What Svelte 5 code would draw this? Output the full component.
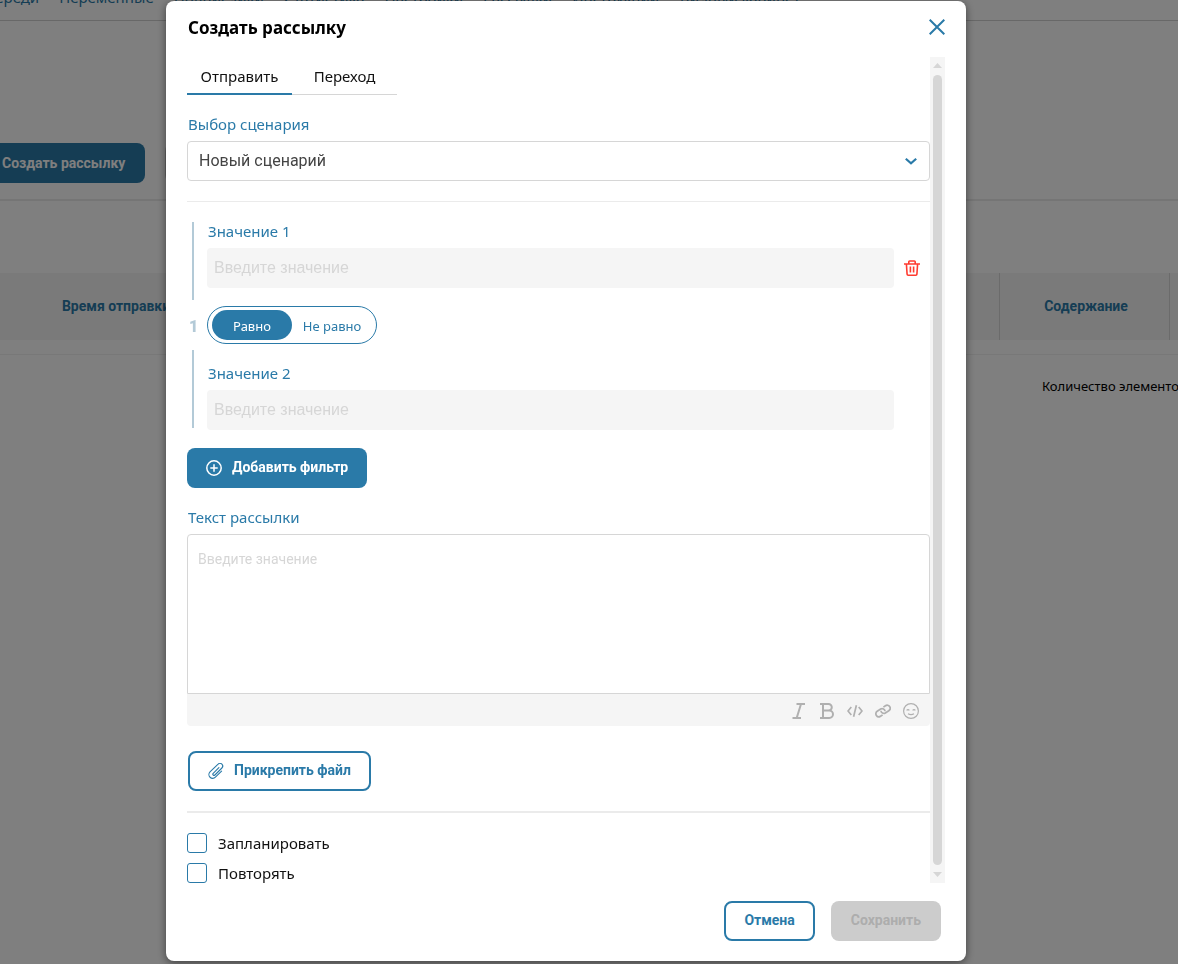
<script lang="ts">
    const menu = ['Очереди', 'Переменные', 'Подписчики', 'Статистика', 'Настройки', 'Рассылки', 'Инструкции', 'Личный кабинет'];
    const tabs = ['Отправить', 'Переход'];
    const operators = ['Равно', 'Не равно'];

    let activeTab = $state('Отправить');
    let operator = $state('Равно');
    let scenario = $state('Новый сценарий');
    let first = $state('');
    let second = $state('');
    let message = $state('');
    let planned = $state(false);
    let repeated = $state(false);
</script>

<div class="page">
    <nav class="menu">
        {#each menu as item}
            <a href="#menu">{item}</a>
        {/each}
    </nav>
    <div class="actions">
        <button class="btn primary page-btn">Создать рассылку</button>
        <button class="btn disabled" disabled aria-label="Удалить"></button>
    </div>
    <table class="table">
        <thead>
            <tr>
                <th class="time">Время отправки</th>
                <th></th>
                <th class="content">Содержание</th>
                <th class="tail"></th>
            </tr>
        </thead>
    </table>
    <div class="pager"><span>Количество элементов</span></div>
</div>

<div class="overlay">
    <div class="modal" role="dialog" aria-modal="true" aria-labelledby="modal-title">
        <header class="head">
            <h2 id="modal-title">Создать рассылку</h2>
            <button class="icon-btn" aria-label="Закрыть">
                <svg width="16" height="16" viewBox="0 0 16 16" fill="none" stroke="#2a7aa8" stroke-width="2">
                    <path d="M.7.7l14.6 14.6M15.3.7L.7 15.3" />
                </svg>
            </button>
        </header>

        <div class="body">
            <div class="form">
                <div class="tabs" role="tablist">
                    {#each tabs as tab}
                        <button class="tab" class:active={activeTab === tab} role="tab" aria-selected={activeTab === tab}
                            onclick={() => (activeTab = tab)}>{tab}</button>
                    {/each}
                </div>

                <div class="field scenario">
                    <label for="scenario">Выбор сценария</label>
                    <div class="select">
                        <select id="scenario" bind:value={scenario}>
                            <option>Новый сценарий</option>
                        </select>
                        <svg class="chevron" width="14" height="8" viewBox="0 0 14 8" fill="none" stroke="#2a7aa8" stroke-width="2.2">
                            <path d="M1.8 1.8L7 6.4l5.2-4.6" />
                        </svg>
                    </div>
                </div>

                <div class="filter">
                    <div class="rail">
                        <i></i>
                        <b>1</b>
                        <i></i>
                    </div>
                    <div class="values">
                        <div class="field">
                            <label for="first">Значение 1</label>
                            <div class="value-row">
                                <input id="first" type="text" placeholder="Введите значение" bind:value={first} />
                                <button class="icon-btn" aria-label="Удалить фильтр">
                                    <svg width="16" height="16" viewBox="0 0 16 16" fill="none" stroke="#ff3b30" stroke-width="1.6">
                                        <path d="M0 4h16M4.8 4V1.8q0-.8.8-.8h4.8q.8 0 .8.8V4M2.4 4l.7 10.2q.1 1 1 1h7.8q.9 0 1-1L13.6 4M6.4 6.5v6M9.6 6.5v6" />
                                    </svg>
                                </button>
                            </div>
                        </div>
                        <div class="toggle">
                            {#each operators as op}
                                <button class:on={operator === op} onclick={() => (operator = op)}>{op}</button>
                            {/each}
                        </div>
                        <div class="field">
                            <label for="second">Значение 2</label>
                            <div class="value-row">
                                <input id="second" type="text" placeholder="Введите значение" bind:value={second} />
                            </div>
                        </div>
                    </div>
                </div>

                <button class="btn primary add">
                    <svg width="16" height="16" viewBox="0 0 16 16" fill="none" stroke="#fff" stroke-width="1.5">
                        <circle cx="8" cy="8" r="7.2" />
                        <path d="M8 4.3v7.4M4.3 8h7.4" />
                    </svg>
                    Добавить фильтр
                </button>

                <div class="field">
                    <label for="message">Текст рассылки</label>
                    <div class="editor">
                        <textarea id="message" placeholder="Введите значение" bind:value={message}></textarea>
                        <div class="toolbar">
                            <button class="icon-btn" aria-label="Курсив">
                                <svg width="16" height="16" viewBox="0 0 16 16" fill="none" stroke="#b0b0b0" stroke-width="2">
                                    <path d="M5.5 1h8.5M1.5 15h8.5M10 1L5.7 15" />
                                </svg>
                            </button>
                            <button class="icon-btn" aria-label="Жирный">
                                <svg width="16" height="16" viewBox="0 0 16 16" fill="none" stroke="#b0b0b0" stroke-width="2">
                                    <path d="M1 1h8.5a3.3 3.3 0 0 1 0 6.6H4M9.5 7.6h.8a3.7 3.7 0 0 1 0 7.4H1M4 1v14" />
                                </svg>
                            </button>
                            <button class="icon-btn" aria-label="Код">
                                <svg width="16" height="16" viewBox="0 0 16 16" fill="none" stroke="#b0b0b0" stroke-width="1.7">
                                    <path d="M4.3 4L1 8l3.3 4M11.7 4L15 8l-3.3 4M9.4 2.3L6.6 13.7" />
                                </svg>
                            </button>
                            <button class="icon-btn" aria-label="Ссылка">
                                <svg width="16" height="16" viewBox="0 0 16 16" fill="none" stroke="#b0b0b0" stroke-width="1.7">
                                    <g transform="rotate(-34 8 8)">
                                        <path d="M9.6 9.4A3 3 0 0 0 7.2 5H3a3 3 0 0 0 0 6h2.5" />
                                        <path d="M6.4 6.6A3 3 0 0 0 8.8 11H13a3 3 0 0 0 0-6h-2.5" />
                                    </g>
                                </svg>
                            </button>
                            <button class="icon-btn" aria-label="Эмодзи">
                                <svg width="16" height="16" viewBox="0 0 16 16" fill="none" stroke="#b0b0b0" stroke-width="1.2">
                                    <circle cx="8" cy="8" r="7.4" />
                                    <path d="M3.6 7.4q1.4-1.4 2.8 0M9.6 7.4q1.4-1.4 2.8 0M5 10.8q3 1.8 6 0" />
                                </svg>
                            </button>
                        </div>
                    </div>
                </div>

                <button class="btn outline attach">
                    <svg width="16" height="16" viewBox="0 0 16 16" fill="none" stroke="#2a7aa8" stroke-width="1.1" stroke-linecap="round">
                        <path d="M10.9 4.6L5.2 10.3a1.2 1.2 0 0 0 1.7 1.7l7-7a2.5 2.5 0 0 0-3.8-3.8L2 8.9a3.7 3.7 0 0 0 5.4 5.3l6.2-6.1" />
                    </svg>
                    Прикрепить файл
                </button>

                <div class="checks">
                    <label><input type="checkbox" bind:checked={planned} />Запланировать</label>
                    <label><input type="checkbox" bind:checked={repeated} />Повторять</label>
                </div>
            </div>

            <div class="scroll" aria-hidden="true">
                <svg width="9" height="5" viewBox="0 0 9 5"><path d="M0 5L4.5 0 9 5z" fill="#d6d6d6" /></svg>
                <div class="thumb"></div>
                <svg width="9" height="5" viewBox="0 0 9 5"><path d="M0 0l4.5 5L9 0z" fill="#d6d6d6" /></svg>
            </div>
        </div>

        <footer class="foot">
            <button class="btn outline">Отмена</button>
            <button class="btn disabled" disabled>Сохранить</button>
        </footer>
    </div>
</div>

<style>
    :global(body) { margin: 0; background: #fff; font-family: "Noto Sans", "Open Sans", sans-serif; overflow: hidden; }
    * { box-sizing: border-box; }
    button, input, select, textarea { font-family: Roboto, sans-serif; margin: 0; }
    button { cursor: pointer; }

    .page { overflow: hidden; }
    .menu { display: flex; gap: 20px; height: 61px; margin: -40px 0 0 -25px; padding-top: 27px;
        border-bottom: 1px solid #d0d0d0; white-space: nowrap; }
    .menu a { color: #2a7aa8; text-decoration: none; font-size: 15px; line-height: 20px; }
    .actions { display: flex; gap: 20px; padding: 122px 0 16px; border-bottom: 2px solid #ebebeb; }
    .page-btn { margin-left: -18px; padding-right: 16px; }
    .table { width: 100%; margin-top: 72px; border-collapse: collapse; table-layout: fixed; background: #f5f5f5; }
    .table th { height: 67px; padding: 0 0 2px; color: #2a7aa8; font: 700 14px/20px Roboto, sans-serif; }
    .table .time { width: 232px; }
    .table .content { width: 170px; padding-left: 4px; border-left: 1px solid #d6d6d6; border-right: 1px solid #d6d6d6; }
    .table .tail { width: 9px; }
    .pager { display: flex; justify-content: flex-end; margin-top: 14px; padding-top: 21px;
        border-top: 1px solid #f0f0f0; font-size: 13px; line-height: 20px; white-space: nowrap; }
    .pager span { width: 136px; }

    .overlay { position: fixed; inset: 0; padding: 1px 46px 0 0; display: flex; justify-content: center;
        align-items: flex-start; overflow: hidden; background: rgba(0, 0, 0, .5); }
    .modal { width: 800px; max-width: 100%; padding: 0 21px 20px; border-radius: 8px; background: #fff;
        box-shadow: 0 2px 8px rgba(0, 0, 0, .5); }
    .head { display: flex; justify-content: space-between; align-items: center; height: 56px; padding-bottom: 4px; }
    .head h2 { margin: 0; padding: 2px 0 0 1px; font-size: 17px; line-height: 24px; }

    .icon-btn { display: flex; justify-content: center; align-items: center; padding: 0; border: 0; background: none; }
    .btn { display: flex; align-items: center; height: 40px; padding: 0 20px 2px; border: 0; border-radius: 8px;
        font-size: 14px; font-weight: 700; line-height: 20px; white-space: nowrap; }
    .primary { background: #2a7aa8; color: #fff; }
    .outline { border: 2px solid #2a7aa8; padding: 0 18px 2px; background: #fff; color: #2a7aa8; }
    .disabled { background: #ccc; color: #adadad; }
    .btn.page-btn { padding-bottom: 0; }
    .btn svg { margin-top: 2px; }

    .body { display: flex; }
    .form { flex: 1; min-width: 0; }
    .tabs { display: flex; }
    .tab { width: 105px; height: 38px; padding: 2px 0 1px; border: 0; border-bottom: 1px solid #d6d6d6; background: none;
        color: #111; font: 15px/20px "Noto Sans", "Open Sans", sans-serif; }
    .tab.active { padding-bottom: 0; border-bottom: 2px solid #2a7aa8; }

    .field { display: flex; flex-direction: column; gap: 8px; }
    .field label { padding-left: 1px; color: #2a7aa8; font-size: 15px; line-height: 18px; }
    .scenario { padding: 20px 0; border-bottom: 1px solid #ebebeb; }
    .select { display: grid; align-items: center; }
    .select select { grid-area: 1 / 1; height: 40px; padding: 0 11px 2px; border: 1px solid #d6d6d6; border-radius: 4px;
        appearance: none; background: #fff; color: #444; font-size: 16px; }
    .chevron { grid-area: 1 / 1; justify-self: end; margin-right: 12px; pointer-events: none; }

    .filter { display: flex; margin: 20px 0 18px; }
    .rail { display: flex; flex-direction: column; width: 20px; padding-bottom: 2px; }
    .rail i { flex: 1; width: 2px; margin-left: 5px; background: #b3cad7; }
    .rail b { height: 50px; padding-left: 2px; color: #b3cad7; font: 900 16px/54px Roboto, sans-serif; }
    .values { flex: 1; min-width: 0; }
    .value-row { display: grid; grid-template-columns: 1fr 36px; }
    .value-row input { height: 40px; min-width: 0; padding: 0 7px; border: 0; border-radius: 4px; background: #f5f5f5;
        color: #444; font-family: "Liberation Sans", Arial, sans-serif; font-size: 16px; }
    input::placeholder, textarea::placeholder { color: #d6d6d6; opacity: 1; }
    .toggle { display: flex; width: 170px; height: 38px; margin: 18px 0 20px; padding: 3px 4px; border: 1px solid #2a7aa8;
        border-radius: 19px; }
    .toggle button { width: 80px; height: 30px; padding: 2px 0 0; border: 0; border-radius: 15px; background: none;
        color: #2a7aa8; font: 13px/20px "Noto Sans", "Open Sans", sans-serif; }
    .toggle .on { background: #2a7aa8; color: #fff; }

    .add { gap: 10px; margin-bottom: 20px; padding: 0 19px 2px; }
    .editor { display: flex; flex-direction: column; }
    .editor textarea { height: 160px; padding: 14px 10px; border: 1px solid #d6d6d6; border-radius: 4px 4px 0 0;
        resize: none; color: #444; font-size: 14px; line-height: 20px; }
    .toolbar { display: flex; justify-content: flex-end; gap: 12px; height: 32px; padding: 2px 11px 0 0;
        border-radius: 0 0 4px 4px; background: #f5f5f5; }
    .attach { gap: 10px; margin: 25px 0 20px 1px; }
    .checks { display: flex; flex-direction: column; gap: 10px; padding-top: 20px; border-top: 2px solid #ebebeb; }
    .checks label { display: flex; gap: 11px; color: #111; font-size: 15px; line-height: 20px; }
    .checks input { width: 20px; height: 20px; margin: 0; appearance: none; border: 1px solid #2a7aa8; border-radius: 3px; }
    .checks input:checked { background: #2a7aa8; }

    .scroll { display: flex; flex-direction: column; align-items: center; gap: 7px; width: 15px; padding: 6px 0;
        background: #f5f5f5; }
    .thumb { flex: 1; width: 9px; border-radius: 5px; background: #d6d6d6; }

    .foot { display: flex; justify-content: flex-end; gap: 16px; padding: 18px 4px 0 0; }
</style>
